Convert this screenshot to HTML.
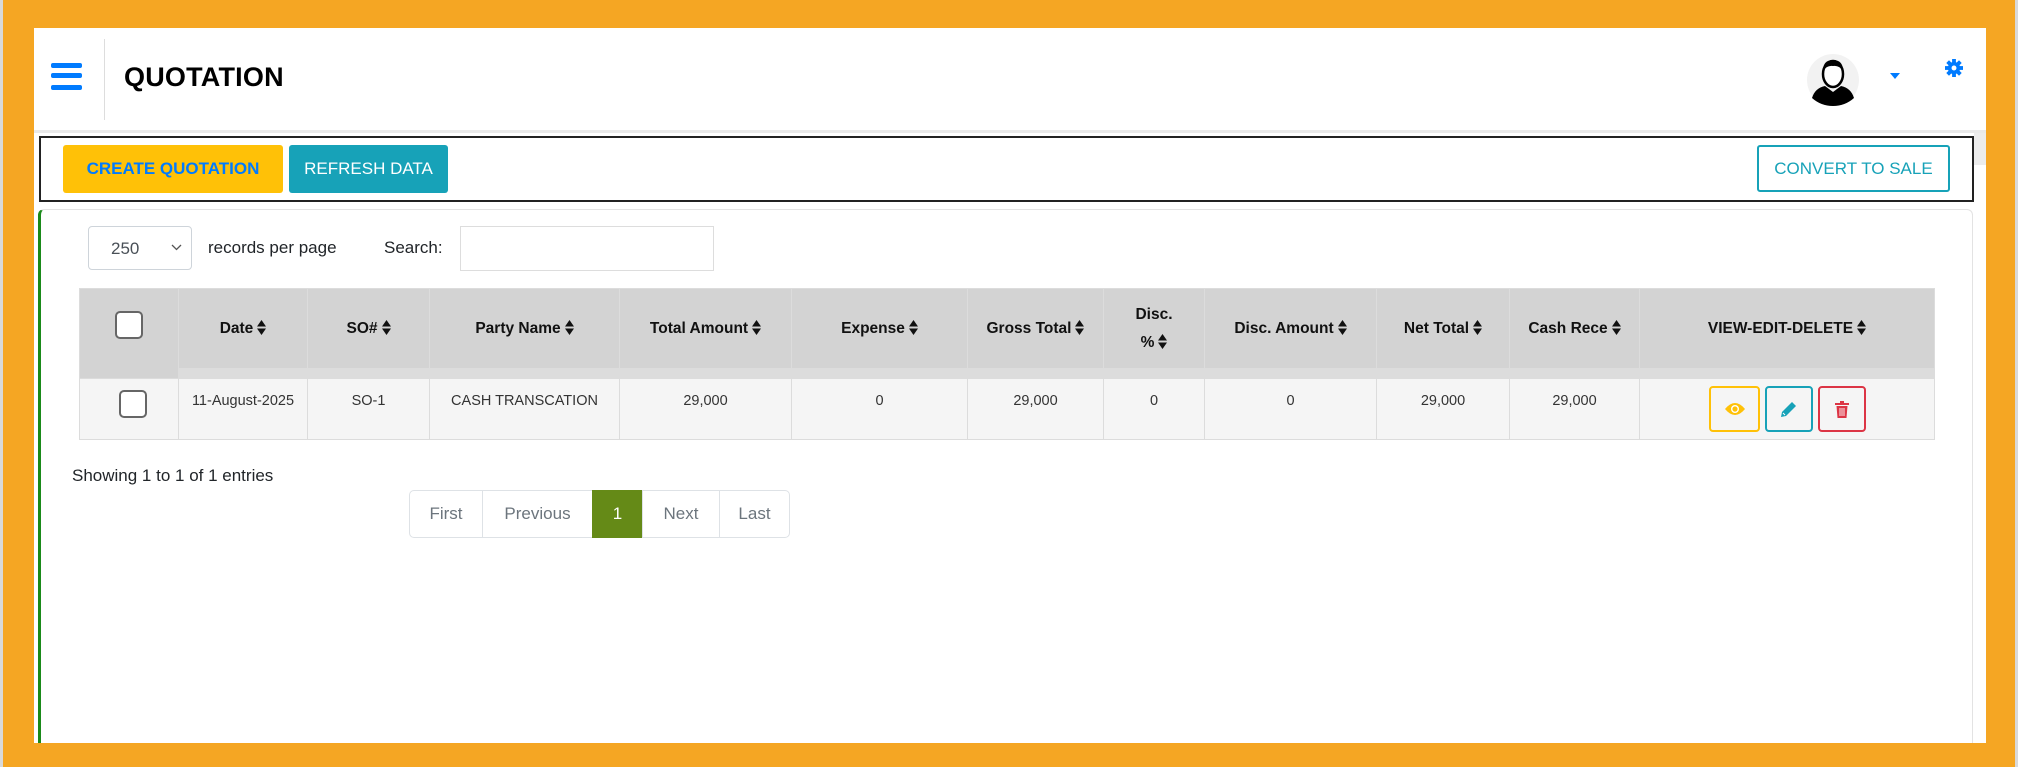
<!DOCTYPE html>
<html><head><meta charset="utf-8">
<style>
*{box-sizing:border-box;margin:0;padding:0}
body{width:2018px;height:767px;background:#f5a623;position:relative;overflow:hidden;font-family:"Liberation Sans",sans-serif;color:#212529}
.a{position:absolute}
#lstrip{left:0;top:0;width:3px;height:767px;background:#d9d9d9}
#rstrip{left:2015px;top:0;width:3px;height:767px;background:#d9d9d9}
#panel{left:34px;top:28px;width:1952px;height:715px;background:#fff}
.bar{left:51px;width:31px;height:5px;background:#007bff;border-radius:2px}
#title{left:124px;top:62px;font-size:27px;font-weight:bold;color:#000;letter-spacing:0.2px}
.btn{display:flex;align-items:center;justify-content:center;font-size:17px;border-radius:3px}
table{position:absolute;left:79px;top:288px;border-collapse:collapse;table-layout:fixed;width:1855px}
td,th{border:1px solid #dcdcdc;text-align:center;vertical-align:top}
th{background:#d3d3d3;height:80px;font-size:15.5px;font-weight:bold;color:#111;vertical-align:middle}
tr.gap td{background:#dcdcdc;height:10px;border:none}
tr.body td{background:#f5f5f5;height:61px;font-size:14.5px;padding-top:14px;color:#333}
.s{display:inline-block;width:9px;height:15px;vertical-align:-2px;margin-left:4px}
.cb{display:inline-block;width:28px;height:28px;border:2px solid #666;border-radius:5px;background:#fff}
.ab{position:absolute;top:386px;height:46px;border:2px solid;border-radius:4px;background:#f5f5f5;display:flex;align-items:center;justify-content:center}
.pg{position:absolute;top:490px;height:48px;border:1px solid #dee2e6;display:flex;align-items:center;justify-content:center;font-size:17px;color:#6c757d;background:#fff}
</style></head><body>
<div class="a" id="lstrip"></div><div class="a" id="rstrip"></div>
<div class="a" id="panel"></div>
<div class="a bar" style="top:63px"></div><div class="a bar" style="top:73px"></div><div class="a bar" style="top:85px"></div>
<div class="a" style="left:104px;top:39px;width:1px;height:81px;background:#ddd"></div>
<div class="a" id="title">QUOTATION</div>
<svg class="a" style="left:1807px;top:54px" width="52" height="52" viewBox="0 0 52 52">
<circle cx="26" cy="26" r="26" fill="#f2f2f2"/>
<path d="M5 44 Q8 34 18 32 L26 38 L34 32 Q44 34 47 44 Q38 52 26 52 Q14 52 5 44Z" fill="#000"/>
<ellipse cx="26" cy="20" rx="10" ry="13" fill="#fff" stroke="#000" stroke-width="2.5"/>
<path d="M16 17 Q16 6 26 6 Q36 6 36 17 Q32 11 26 12 Q20 11 16 17Z" fill="#000"/>
</svg>
<svg class="a" style="left:1890px;top:73px" width="10" height="6"><path d="M0 0H10L5 6Z" fill="#007bff"/></svg>
<svg class="a" style="left:1945px;top:59px" width="18" height="18" viewBox="0 0 16 16"><g fill="#007bff"><circle cx="8" cy="8" r="5.5"/><rect x="6.3" y="0" width="3.4" height="16"/><rect x="0" y="6.3" width="16" height="3.4"/><rect x="6.3" y="0" width="3.4" height="16" transform="rotate(45 8 8)"/><rect x="6.3" y="0" width="3.4" height="16" transform="rotate(-45 8 8)"/></g><circle cx="8" cy="8" r="2.2" fill="#fff"/></svg>
<div class="a" style="left:34px;top:130px;width:1952px;height:3px;background:#e9e9e9"></div>
<div class="a" style="left:1974px;top:133px;width:12px;height:32px;background:#ececec"></div>
<div class="a" style="left:39px;top:136px;width:1935px;height:66px;border:2px solid #222"></div>
<div class="a btn" style="left:63px;top:145px;width:220px;height:48px;background:#ffc107;color:#007bff;font-weight:bold">CREATE QUOTATION</div>
<div class="a btn" style="left:289px;top:145px;width:159px;height:48px;background:#17a2b8;color:#fff">REFRESH DATA</div>
<div class="a btn" style="left:1757px;top:145px;width:193px;height:47px;border:2px solid #17a2b8;color:#17a2b8;background:#fff">CONVERT TO SALE</div>
<div class="a" style="left:38px;top:209px;width:1935px;height:534px;border:1px solid #e3e3e3;border-bottom:none;border-left:3px solid #1a8a1a;border-radius:6px 6px 0 0"></div>
<div class="a" style="left:88px;top:226px;width:104px;height:44px;border:1px solid #ced4da;border-radius:4px;font-size:17px;color:#495057;padding:12px 0 0 22px">250</div>
<svg class="a" style="left:171px;top:244px" width="11" height="7"><path d="M1 1L5.5 5.5L10 1" stroke="#555" stroke-width="1.3" fill="none"/></svg>
<div class="a" style="left:208px;top:238px;font-size:17px">records per page</div>
<div class="a" style="left:384px;top:238px;font-size:17px">Search:</div>
<div class="a" style="left:460px;top:226px;width:254px;height:45px;border:1px solid #ddd"></div>
<table>
<colgroup><col style="width:99px"><col style="width:129px"><col style="width:122px"><col style="width:190px"><col style="width:172px"><col style="width:176px"><col style="width:136px"><col style="width:101px"><col style="width:172px"><col style="width:133px"><col style="width:130px"><col style="width:295px"></colgroup>
<tr>
<th rowspan="2" style="height:85px;vertical-align:top;padding-top:22px"><span class="cb"></span></th>
<th>Date<svg class="s" viewBox="0 0 9 15"><path d="M0 6.5H9L4.5 0ZM0 8.5H9L4.5 15Z" fill="#111"/></svg></th>
<th>SO#<svg class="s" viewBox="0 0 9 15"><path d="M0 6.5H9L4.5 0ZM0 8.5H9L4.5 15Z" fill="#111"/></svg></th>
<th>Party Name<svg class="s" viewBox="0 0 9 15"><path d="M0 6.5H9L4.5 0ZM0 8.5H9L4.5 15Z" fill="#111"/></svg></th>
<th>Total Amount<svg class="s" viewBox="0 0 9 15"><path d="M0 6.5H9L4.5 0ZM0 8.5H9L4.5 15Z" fill="#111"/></svg></th>
<th>Expense<svg class="s" viewBox="0 0 9 15"><path d="M0 6.5H9L4.5 0ZM0 8.5H9L4.5 15Z" fill="#111"/></svg></th>
<th>Gross Total<svg class="s" viewBox="0 0 9 15"><path d="M0 6.5H9L4.5 0ZM0 8.5H9L4.5 15Z" fill="#111"/></svg></th>
<th style="line-height:28px">Disc.<br>%<svg class="s" viewBox="0 0 9 15"><path d="M0 6.5H9L4.5 0ZM0 8.5H9L4.5 15Z" fill="#111"/></svg></th>
<th>Disc. Amount<svg class="s" viewBox="0 0 9 15"><path d="M0 6.5H9L4.5 0ZM0 8.5H9L4.5 15Z" fill="#111"/></svg></th>
<th>Net Total<svg class="s" viewBox="0 0 9 15"><path d="M0 6.5H9L4.5 0ZM0 8.5H9L4.5 15Z" fill="#111"/></svg></th>
<th>Cash Rece<svg class="s" viewBox="0 0 9 15"><path d="M0 6.5H9L4.5 0ZM0 8.5H9L4.5 15Z" fill="#111"/></svg></th>
<th>VIEW-EDIT-DELETE<svg class="s" viewBox="0 0 9 15"><path d="M0 6.5H9L4.5 0ZM0 8.5H9L4.5 15Z" fill="#111"/></svg></th>
</tr>
<tr class="gap"><td></td><td></td><td></td><td></td><td></td><td></td><td></td><td></td><td></td><td></td><td></td></tr>
<tr class="body">
<td style="padding-top:11px"><span class="cb" style="margin-left:8px"></span></td>
<td>11-August-2025</td><td>SO-1</td><td>CASH TRANSCATION</td><td>29,000</td><td>0</td><td>29,000</td><td>0</td><td>0</td><td>29,000</td><td>29,000</td><td></td>
</tr>
</table>
<div class="ab" style="left:1709px;width:51px;border-color:#ffc107">
<svg width="20" height="14" viewBox="0 0 20 14"><path d="M0 7Q10 -5 20 7Q10 19 0 7Z" fill="#ffc107"/><circle cx="10" cy="7" r="4" fill="#fff"/><circle cx="10" cy="7" r="2.6" fill="#ffc107"/></svg></div>
<div class="ab" style="left:1765px;width:48px;border-color:#17a2b8">
<svg width="18" height="18" viewBox="0 0 18 18"><path d="M2 12L12 2L16 6L6 16L1 17Z" fill="#17a2b8"/><path d="M3 13L5 15" stroke="#fff" stroke-width="1"/></svg></div>
<div class="ab" style="left:1818px;width:48px;border-color:#dc3545">
<svg width="14" height="17" viewBox="0 0 14 17"><path d="M0 2H14V4H0ZM5 0H9V2H5Z" fill="#dc3545"/><path d="M1.5 5H12.5L11.5 17H2.5Z" fill="#dc3545"/><path d="M5 7V15M7 7V15M9 7V15" stroke="#fff" stroke-width="0.9"/></svg></div>
<div class="a" style="left:72px;top:466px;font-size:17px">Showing 1 to 1 of 1 entries</div>
<div class="pg" style="left:409px;width:74px;border-radius:5px 0 0 5px">First</div>
<div class="pg" style="left:482px;width:111px">Previous</div>
<div class="pg" style="left:592px;width:51px;background:#658a17;border-color:#658a17;color:#fff">1</div>
<div class="pg" style="left:642px;width:78px">Next</div>
<div class="pg" style="left:719px;width:71px;border-radius:0 5px 5px 0">Last</div>
</body></html>
